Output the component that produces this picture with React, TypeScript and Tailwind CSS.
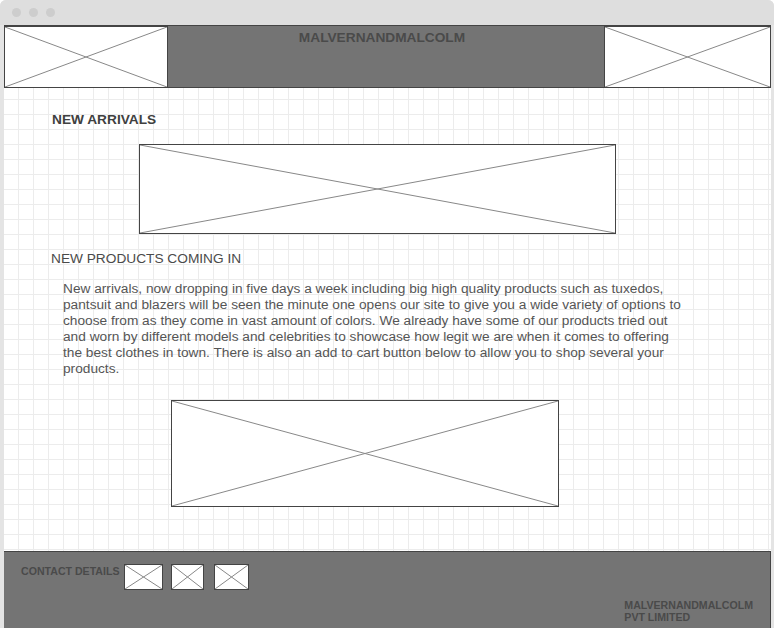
import React from 'react';

function Placeholder({ className = '' }: { className?: string }) {
  return (
    <div className={`relative bg-white border border-[#444] ${className}`}>
      <svg
        className="absolute inset-0 w-full h-full"
        viewBox="0 0 100 100"
        preserveAspectRatio="none"
      >
        <line x1="0" y1="0" x2="100" y2="100" stroke="#888" strokeWidth="1" vectorEffect="non-scaling-stroke" />
        <line x1="100" y1="0" x2="0" y2="100" stroke="#888" strokeWidth="1" vectorEffect="non-scaling-stroke" />
      </svg>
    </div>
  );
}

export default function App() {
  return (
    <div
      className="w-[774px] h-[628px] overflow-hidden bg-[#e4e4e4] flex flex-col rounded-t-md"
      style={{ fontFamily: '"Liberation Sans", Arial, sans-serif' }}
    >
      {/* Window chrome */}
      <div className="h-[25px] shrink-0 bg-[#dedede] flex items-center gap-[8px] pl-[12px]">
        <span className="w-[9px] h-[9px] rounded-full bg-[#cdcdcd]" />
        <span className="w-[9px] h-[9px] rounded-full bg-[#cdcdcd]" />
        <span className="w-[9px] h-[9px] rounded-full bg-[#cdcdcd]" />
      </div>

      <div className="flex-1 flex flex-col ml-[4px] mr-[3px] min-h-0">
        {/* Header */}
        <div className="h-[63px] shrink-0 flex border-t border-[#444] bg-[#747474]">
          <Placeholder className="w-[164px] h-full" />
          <div className="flex-1 flex justify-center pt-[4px] pr-[8px] border-b border-[#444]">
            <span className="text-[13.7px] leading-[16px] font-bold text-[#4a4a4a]">MALVERNANDMALCOLM</span>
          </div>
          <Placeholder className="w-[167px] h-full" />
        </div>

        {/* Content */}
        <div className="h-[463px] shrink-0 flex flex-col items-start bg-white bg-[linear-gradient(to_right,#ececec_1px,transparent_1px),linear-gradient(to_bottom,#ececec_1px,transparent_1px)] bg-[size:15px_15px] bg-[position:14px_11px]">
          <h2 className="mt-[24px] ml-[48px] text-[13.7px] leading-[16px] font-bold text-[#404040]">NEW ARRIVALS</h2>
          <Placeholder className="mt-[16px] ml-[135px] w-[477px] h-[90px]" />
          <h3 className="mt-[17px] ml-[47px] text-[13.7px] leading-[16px] text-[#4a4a4a]">NEW PRODUCTS COMING IN</h3>
          <p className="mt-[14px] ml-[59px] w-[624px] text-[13.7px] leading-[16px] text-[#555]">
            New arrivals, now dropping in five days a week including big high quality products such as tuxedos,
            pantsuit and blazers will be seen the minute one opens our site to give you a wide variety of options to
            choose from as they come in vast amount of colors. We already have some of our products tried out
            and worn by different models and celebrities to showcase how legit we are when it comes to offering
            the best clothes in town. There is also an add to cart button below to allow you to shop several your
            products.
          </p>
          <Placeholder className="mt-[23px] ml-[167px] w-[388px] h-[107px]" />
        </div>

        {/* Footer */}
        <div className="flex-1 flex justify-between bg-[#747474] border-t border-r border-[#444]">
          <div className="flex items-start pt-[12px] pl-[17px]">
            <span className="mt-[1px] text-[10.6px] leading-[12px] font-bold text-[#4a4a4a]">CONTACT DETAILS</span>
            <Placeholder className="ml-[5px] w-[39px] h-[26px]" />
            <Placeholder className="ml-[8px] w-[33px] h-[26px]" />
            <Placeholder className="ml-[10px] w-[35px] h-[26px]" />
          </div>
          <div className="flex flex-col justify-end pb-[5px] pr-[17px]">
            <span className="text-[10.6px] leading-[12px] font-bold text-[#4a4a4a]">MALVERNANDMALCOLM</span>
            <span className="text-[10.6px] leading-[12px] font-bold text-[#4a4a4a]">PVT LIMITED</span>
          </div>
        </div>
      </div>
    </div>
  );
}
